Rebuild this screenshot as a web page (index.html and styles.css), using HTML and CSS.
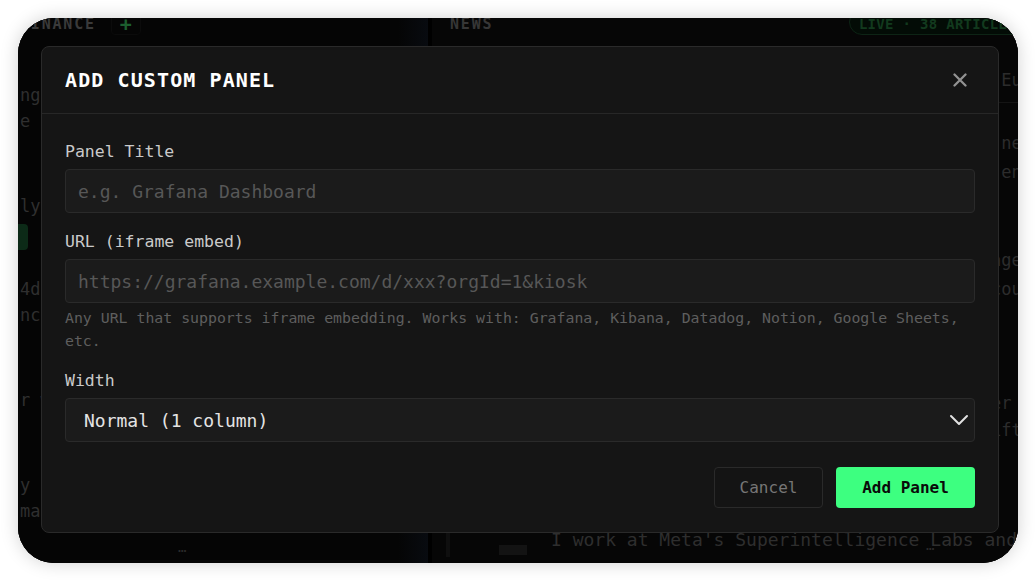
FILE: index.html
```html
<!DOCTYPE html>
<html lang="en">
<head>
<meta charset="utf-8">
<title>Add Custom Panel</title>
<link rel="stylesheet" href="styles.css">
</head>
<body>
<div class="frame">
  <div class="dash">
    <section class="panel panel-left">
      <header class="panel-head">
        <span class="panel-name">FINANCE</span>
        <span class="add-btn">+</span>
      </header>
      <div class="panel-body">
        <p class="ln l1">ng markets rally on strong earnings data</p>
        <p class="ln l2">e index closes higher for third session</p>
        <p class="ln l3">ly volatility remains elevated</p>
        <div class="tag">+2.4%</div>
        <p class="ln l4">4d. Treasury yields fall after report</p>
        <p class="ln l5">nce guidance lifted for the full year</p>
        <p class="ln l6">r w crude oil slides on supply worries</p>
        <p class="ln l7">y C central bank holds rates steady</p>
        <p class="ln l8">mar market outlook for the coming week</p>
      </div>
      <div class="more">…</div>
    </section>
    <section class="panel panel-right">
      <header class="panel-head">
        <span class="panel-name news">NEWS</span>
        <span class="badge">LIVE · 38 ARTICLES</span>
      </header>
      <div class="panel-body right-body">
        <p class="rl r1">Leaders gather in Brussels to debate a bold Europe-wide plan</p>
        <p class="rl r2">Scientists publish new findings about how a new model learns</p>
        <p class="rl r3">Startups race to build the next big wave of engineering tools</p>
        <p class="rl r4">Regulators now weigh tougher rules for storage of user data</p>
        <p class="rl r5">Analysts say the new ruling on the mergers could reshape the industry</p>
        <p class="rl r6">Engineers describe what it takes to go faster safely</p>
        <p class="rl r7">Teams are changing how they plan for the shift to remote work</p>
        <div class="bottom-row">
          <span class="vbar"></span>
          <span class="thumb"></span>
          <p class="rl r8">I work at Meta's Superintelligence Labs and</p>
        </div>
      </div>
      <div class="more more-right">…</div>
    </section>
  </div>

  <div class="overlay">
    <div class="modal">
      <div class="modal-head">
        <h2 class="modal-title">ADD CUSTOM PANEL</h2>
        <button class="close" aria-label="Close">
          <svg width="14" height="14" viewBox="0 0 14 14"><path d="M1.5 1.5 L12.5 12.5 M12.5 1.5 L1.5 12.5" stroke="#929292" stroke-width="2.3" stroke-linecap="round" fill="none"/></svg>
        </button>
      </div>
      <div class="modal-body">
        <div class="field">
          <label class="label">Panel Title</label>
          <input class="input" type="text" placeholder="e.g. Grafana Dashboard">
        </div>
        <div class="field field-url">
          <label class="label">URL (iframe embed)</label>
          <input class="input" type="text" placeholder="https://grafana.example.com/d/xxx?orgId=1&amp;kiosk">
          <p class="hint">Any URL that supports iframe embedding. Works with: Grafana, Kibana, Datadog, Notion, Google Sheets, etc.</p>
        </div>
        <div class="field field-width">
          <label class="label">Width</label>
          <div class="select-wrap">
            <select class="select">
              <option>Normal (1 column)</option>
              <option>Wide (2 columns)</option>
            </select>
            <svg class="chev" width="20" height="12" viewBox="0 0 20 12"><path d="M2 2 L10 10 L18 2" stroke="#e2e2e2" stroke-width="2" fill="none" stroke-linecap="round" stroke-linejoin="round"/></svg>
          </div>
        </div>
        <div class="actions">
          <button class="btn btn-cancel">Cancel</button>
          <button class="btn btn-add">Add Panel</button>
        </div>
      </div>
    </div>
  </div>
</div>
</body>
</html>
```
FILE: styles.css
```css
* { box-sizing: border-box; }
html, body { margin: 0; padding: 0; }
body {
  background: #ffffff;
  width: 1036px;
  height: 582px;
  overflow: hidden;
  font-family: "DejaVu Sans Mono", "Liberation Mono", monospace;
}
.frame {
  position: relative;
  margin: 18px;
  width: 1000px;
  height: 545px;
  border-radius: 36px;
  overflow: hidden;
  background: #040404;
  box-shadow: 0 0 18px rgba(0, 0, 0, 0.18);
}
.dash {
  display: grid;
  grid-template-columns: 410px 1fr;
  gap: 4px;
  height: 100%;
  background: #000;
}
.panel {
  position: relative;
  background: #060606;
  overflow: hidden;
}
.panel-left {
  background: linear-gradient(90deg, #050505 0, #050505 380px, #080b10 410px);
}
.panel-head {
  display: flex;
  align-items: flex-start;
  height: 28px;
  margin-top: -1px;
}
.panel-name {
  font-size: 15px;
  line-height: 14px;
  font-weight: bold;
  letter-spacing: 1.8px;
  color: #3a3a3a;
  padding-left: 2px;
}
.panel-name.news { padding-left: 18px; color: #363636; }
.add-btn {
  margin-left: 15px;
  margin-top: -6px;
  width: 30px;
  height: 24px;
  border: 1px solid #0b0b0b;
  border-radius: 4px;
  color: #1c5e2f;
  font-weight: bold;
  font-size: 20px;
  line-height: 24px;
  text-align: center;
}
.badge {
  margin-left: auto;
  margin-right: -8px;
  margin-top: -8px;
  height: 26px;
  padding: 3px 9px 0;
  border: 1px solid #0d2415;
  background: #030c06;
  border-radius: 13px;
  color: #123a1e;
  font-size: 14px;
  line-height: 22px;
  font-weight: bold;
  letter-spacing: 0.3px;
  white-space: nowrap;
}
.panel-body { padding: 0; }
.ln, .rl {
  margin: 0;
  white-space: nowrap;
  font-size: 17px;
  line-height: 26px;
  color: #2f2f2f;
}
.ln { padding-left: 2px; }
.l1 { margin-top: 37px; }
.l2 { margin-top: 0; }
.l3 { margin-top: 59px; }
.tag {
  margin-top: 5px;
  width: 160px;
  margin-left: -150px;
  height: 26px;
  background: #0c2a17;
  border-radius: 4px;
}
.l4 { margin-top: 26px; }
.l6 { margin-top: 59px; }
.l7 { margin-top: 59px; }
.more {
  position: absolute;
  left: 160px;
  bottom: 8px;
  color: #2a2a2a;
  font-size: 14px;
  letter-spacing: -2px;
}
.more-right { left: 494px; bottom: 10px; }
.right-body { padding-left: 119px; }
.rl { color: #2c2c2c; }
.r1 { margin-top: 22px; padding-bottom: 9px; border-bottom: 1px solid #141414; width: 900px; }
.r2 { margin-top: 27px; }
.r3 { margin-top: 3px; }
.r4 { margin-top: 62px; }
.r5 { margin-top: 3px; }
.r6 { margin-top: 88px; }
.r7 { margin-top: 1px; }
.bottom-row {
  display: flex;
  align-items: flex-start;
  margin-left: -119px;
  margin-top: 84px;
}
.vbar {
  flex-shrink: 0;
  width: 4px;
  height: 40px;
  margin-left: 14px;
  margin-top: -10px;
  background: #0f0f0f;
}
.thumb {
  flex-shrink: 0;
  width: 28px;
  height: 10px;
  margin-left: 49px;
  margin-top: 18px;
  background: #131313;
}
.r8 { flex-shrink: 0; margin-left: 24px; color: #2e2e2e; font-size: 18px; }

/* overlay + modal */
.overlay {
  position: absolute;
  inset: 0;
  display: flex;
  padding: 28px 19px 30px 23px;
}
.modal {
  flex: 1;
  display: flex;
  flex-direction: column;
  background: #151515;
  border: 1px solid #2a2a2a;
  border-radius: 8px;
}
.modal-head {
  display: flex;
  align-items: center;
  justify-content: space-between;
  height: 67px;
  padding: 0 31px 0 23px;
  border-bottom: 1px solid #272727;
}
.modal-title {
  margin: 0;
  font-size: 20px;
  font-weight: bold;
  letter-spacing: 1.1px;
  color: #ffffff;
}
.close {
  display: flex;
  padding: 0;
  background: none;
  border: 0;
}
.modal-body {
  display: flex;
  flex-direction: column;
  padding: 28px 23px 24px;
}
.field { display: flex; flex-direction: column; }
.field-url { margin-top: 19px; }
.field-width { margin-top: 18px; }
.label {
  font-size: 16.5px;
  line-height: 20px;
  color: #cacaca;
  margin-bottom: 7px;
}
.input, .select {
  width: 100%;
  height: 44px;
  background: #1b1b1b;
  border: 1px solid #2a2a2a;
  border-radius: 4px;
  font-family: "DejaVu Sans Mono", "Liberation Mono", monospace;
  font-size: 18px;
  color: #e0e0e0;
  padding: 0 12px;
  outline: none;
}
.input::placeholder { color: #575757; }
.hint {
  margin: 4px 0 0;
  font-size: 14.85px;
  line-height: 23px;
  color: #5e5e5e;
}
.select-wrap { position: relative; }
.select {
  appearance: none;
  -webkit-appearance: none;
  padding-left: 18px;
  color: #e4e4e4;
}
.chev {
  position: absolute;
  right: 6px;
  top: 16px;
  pointer-events: none;
}
.actions {
  display: flex;
  justify-content: flex-end;
  gap: 13px;
  margin-top: 25px;
}
.btn {
  height: 41px;
  border-radius: 4px;
  font-family: "DejaVu Sans Mono", "Liberation Mono", monospace;
  font-size: 16px;
  padding: 0;
}
.btn-cancel {
  width: 109px;
  background: #141414;
  border: 1px solid #2a2a2a;
  color: #767676;
}
.btn-add {
  width: 139px;
  background: #3dff80;
  border: 0;
  color: #0a0a0a;
  font-weight: bold;
}
```
